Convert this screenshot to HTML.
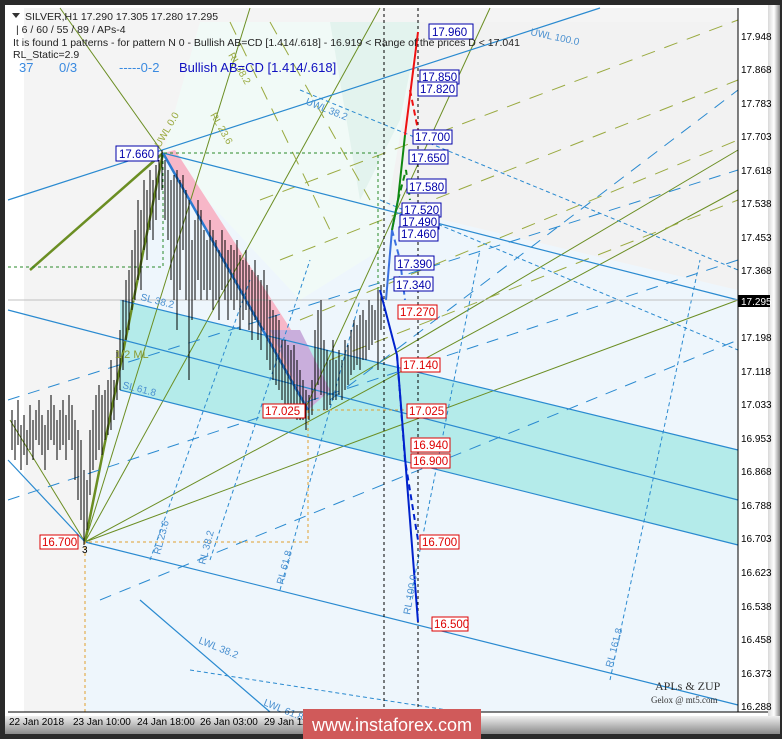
<!DOCTYPE html>
<html><head><meta charset="utf-8"><style>
html,body{margin:0;padding:0;background:#2b2b2b;width:782px;height:739px;overflow:hidden;font-family:"Liberation Sans",sans-serif}
svg{position:absolute;left:0;top:0}
</style></head><body>
<svg width="782" height="739" viewBox="0 0 782 739" xmlns="http://www.w3.org/2000/svg" font-family="Liberation Sans, sans-serif">
<defs><linearGradient id="bev" x1="0" x2="1"><stop offset="0" stop-color="#d8d8d8"/><stop offset="0.5" stop-color="#ffffff"/><stop offset="1" stop-color="#8a8a8a"/></linearGradient>
<linearGradient id="bot" x1="0" y1="0" x2="0" y2="1"><stop offset="0" stop-color="#f0f0f0"/><stop offset="1" stop-color="#8a8a8a"/></linearGradient></defs>
<rect x="0" y="0" width="782" height="739" fill="#2a2a2a"/>
<rect x="5" y="5" width="765" height="726" fill="#ffffff"/>
<rect x="768" y="5" width="12" height="726" fill="url(#bev)"/>
<rect x="5" y="716" width="775" height="18" fill="url(#bot)"/>
<rect x="8" y="8" width="730" height="704" fill="#f4f4f4"/>
<rect x="8" y="8" width="16" height="704" fill="#ffffff"/>
<polygon points="85,542 163,153 738,290 738,712 85,712" fill="#eef6fc"/>
<polygon points="163,153 380,22 738,22 738,290" fill="#f2f2f2"/>
<polygon points="200,22 420,22 380,250 300,300 163,153" fill="#f1faf7"/>
<polygon points="330,22 420,22 400,120 360,200" fill="#e3f3ee"/>
<polygon points="120,300 738,450 738,545 120,390" fill="#b4ebea"/>
<polygon points="85,542 163,153 113,400" fill="#f7b7c8"/>
<polygon points="163,153 175,150 330,390 308,410" fill="#f7b7c8"/>
<polygon points="270,330 300,330 330,390 308,410" fill="#c9aedc"/>
<g stroke="#6b8e23" stroke-width="1" fill="none">
<line x1="85" y1="542" x2="250" y2="8"/>
<line x1="85" y1="542" x2="380" y2="8"/>
<line x1="85" y1="542" x2="738" y2="190"/>
<line x1="85" y1="542" x2="738" y2="300"/>
<line x1="163" y1="153" x2="60" y2="8" />
<line x1="85" y1="542" x2="10" y2="420"/>
<line x1="300" y1="420" x2="490" y2="8"/>
<line x1="350" y1="380" x2="738" y2="150"/>
</g>
<g stroke="#6b8e23" stroke-width="2.5"><line x1="85" y1="542" x2="163" y2="153"/><line x1="163" y1="153" x2="30" y2="270"/></g>
<g stroke="#9aaa40" stroke-width="1" stroke-dasharray="14,10" fill="none">
<line x1="260" y1="200" x2="738" y2="20"/><line x1="280" y1="260" x2="738" y2="80"/><line x1="300" y1="320" x2="738" y2="140"/><line x1="330" y1="360" x2="738" y2="200"/>
<line x1="230" y1="22" x2="330" y2="230"/><line x1="270" y1="22" x2="370" y2="200"/>
</g>
<g stroke="#2a8ad0" stroke-width="1.2" fill="none">
<line x1="8" y1="310" x2="738" y2="500"/>
<line x1="120" y1="300" x2="738" y2="450"/>
<line x1="120" y1="390" x2="738" y2="545"/>
<line x1="163" y1="153" x2="738" y2="300"/>
<line x1="8" y1="200" x2="600" y2="8"/>
<line x1="85" y1="542" x2="738" y2="705"/>
<line x1="140" y1="600" x2="270" y2="712"/>
<line x1="8" y1="460" x2="85" y2="542"/>
</g>
<line x1="163" y1="153" x2="308" y2="410" stroke="#2a7ad0" stroke-width="2.5"/>
<g stroke="#2a8ad0" stroke-width="1" stroke-dasharray="4,3" fill="none">
<line x1="300" y1="90" x2="738" y2="270"/><line x1="380" y1="200" x2="738" y2="350"/>
<line x1="190" y1="670" x2="460" y2="712"/>
<line x1="150" y1="560" x2="250" y2="280"/><line x1="210" y1="560" x2="310" y2="260"/><line x1="280" y1="590" x2="360" y2="300"/><line x1="410" y1="600" x2="480" y2="250"/><line x1="610" y1="680" x2="700" y2="260"/>
</g>
<g stroke="#2a8ad0" stroke-width="1" stroke-dasharray="12,9" fill="none">
<line x1="8" y1="400" x2="738" y2="170"/><line x1="8" y1="500" x2="738" y2="260"/><line x1="100" y1="600" x2="738" y2="340"/><line x1="330" y1="400" x2="738" y2="90"/>
</g>
<g stroke="#000" stroke-width="1" stroke-dasharray="3,3"><line x1="384" y1="8" x2="384" y2="712"/><line x1="418" y1="8" x2="418" y2="712"/></g>
<g stroke="#e0a030" stroke-width="1" stroke-dasharray="3,3" fill="none"><polyline points="85,712 85,542 308,542 308,410 420,410"/></g>
<g stroke="#2a8a2a" stroke-width="1" stroke-dasharray="3,3" fill="none"><polyline points="8,267 163,267 163,153 378,153 378,290"/></g>
<line x1="8" y1="300" x2="738" y2="300" stroke="#c0c0c0"/>
<path stroke="#000" stroke-width="1" fill="none" d="M12 410V450M15 420V460M18 400V445M21 425V470M24 415V455M27 430V465M30 405V450M33 420V460M36 410V440M39 400V445M42 415V455M45 425V470M48 410V450M51 395V440M54 405V445M57 420V460M60 410V450M63 400V445M66 415V460M69 395V440M72 405V450M75 420V480M78 430V500M81 440V520M84 470V545M87 480V530M90 430V495M93 410V470M96 395V460M99 385V450M102 395V455M105 390V440M108 380V435M111 360V430M114 380V420M117 350V400M120 330V390M123 300V370M126 280V340M129 270V330M132 250V310M135 230V300M138 200V280M141 210V290M144 180V250M147 190V260M150 170V230M153 180V240M156 165V220M159 160V200M162 150V190M165 160V220M168 170V240M171 180V280M174 175V300M177 170V330M180 180V290M183 175V250M186 190V300M189 200V380M192 240V320M195 220V300M198 200V280M201 210V300M204 230V290M207 240V300M210 220V290M213 230V310M216 240V300M219 250V320M222 230V290M225 240V300M228 250V320M231 245V300M234 250V310M237 240V300M240 255V330M243 260V320M246 250V310M249 265V330M252 270V340M255 260V320M258 275V340M261 280V350M264 270V330M267 285V360M270 300V370M273 310V380M276 315V385M279 320V390M282 340V400M285 340V410M288 345V415M291 350V410M294 345V405M297 360V420M300 370V420M303 380V420M306 390V430M309 395V420M312 380V415M315 330V400M318 310V385M321 300V395M324 340V410M327 350V410M330 360V405M333 340V400M336 360V400M339 350V395M342 360V400M345 340V390M348 345V385M351 330V375M354 320V370M357 325V365M360 315V370M363 310V360M366 320V360M369 300V350M372 305V345M375 310V340M378 290V370M381 285V330"/>
<g fill="none" stroke-width="2">
<polyline points="380,290 397,355 418,622" stroke="#0022cc"/>
<polyline points="397,355 405,460 418,540" stroke="#0022cc" stroke-dasharray="6,4"/>
<polyline points="386,300 392,230 398,200" stroke="#3a70e0"/>
<polyline points="392,230 400,260 405,300" stroke="#3a70e0" stroke-dasharray="6,4"/>
<polyline points="392,230 398,200 405,135" stroke="#118811"/>
<polyline points="398,200 406,170 410,200" stroke="#118811" stroke-dasharray="6,4"/>
<polyline points="405,135 418,32" stroke="#ee1111"/>
<polyline points="410,90 418,130" stroke="#ee1111" stroke-dasharray="6,4"/>
</g>
<g font-size="11.5">
<g fill="#fff" stroke="#0000aa"><rect x="429" y="24" width="44" height="15"/><rect x="420" y="70" width="39" height="14"/><rect x="418" y="82" width="39" height="14"/><rect x="413" y="130" width="39" height="14"/><rect x="409" y="150" width="39" height="14"/><rect x="407" y="179" width="39" height="14"/><rect x="402" y="203" width="39" height="14"/><rect x="400" y="215" width="39" height="14"/><rect x="399" y="227" width="39" height="14"/><rect x="395" y="256" width="39" height="14"/><rect x="394" y="277" width="39" height="14"/><rect x="116" y="146" width="42" height="15"/></g>
<g fill="#0000aa"><text x="432" y="36">17.960</text><text x="422" y="81">17.850</text><text x="420" y="93">17.820</text><text x="415" y="141">17.700</text><text x="411" y="162">17.650</text><text x="409" y="191">17.580</text><text x="404" y="214">17.520</text><text x="402" y="226">17.490</text><text x="401" y="238">17.460</text><text x="397" y="268">17.390</text><text x="396" y="289">17.340</text><text x="119" y="158">17.660</text></g>
<g fill="#fff" stroke="#dd0000"><rect x="398" y="305" width="39" height="14"/><rect x="401" y="358" width="39" height="14"/><rect x="407" y="404" width="39" height="14"/><rect x="411" y="438" width="39" height="14"/><rect x="411" y="454" width="39" height="14"/><rect x="420" y="535" width="39" height="14"/><rect x="432" y="617" width="36" height="14"/><rect x="263" y="404" width="42" height="14"/><rect x="40" y="535" width="38" height="14"/></g>
<g fill="#dd0000"><text x="400" y="316">17.270</text><text x="403" y="369">17.140</text><text x="409" y="415">17.025</text><text x="413" y="449">16.940</text><text x="413" y="465">16.900</text><text x="422" y="546">16.700</text><text x="434" y="628">16.500</text><text x="265" y="415">17.025</text><text x="42" y="546">16.700</text></g>
</g>
<text x="82" y="553" font-size="10">3</text>
<g font-size="10" fill="#4a90d0"><text x="530" y="35" transform="rotate(12 530 35)">UWL 100.0</text><text x="305" y="104" transform="rotate(22 305 104)">UWL 38.2</text><text x="140" y="300" transform="rotate(14 140 300)">SL 38.2</text><text x="122" y="388" transform="rotate(14 122 388)">SL 61.8</text><text x="198" y="643" transform="rotate(22 198 643)">LWL 38.2</text><text x="263" y="705" transform="rotate(22 263 705)">LWL 61.8</text><text x="160" y="555" transform="rotate(-75 160 555)">RL 23.6</text><text x="205" y="565" transform="rotate(-75 205 565)">RL 38.2</text><text x="283" y="585" transform="rotate(-75 283 585)">RL 61.8</text><text x="612" y="668" transform="rotate(-75 612 668)">RL 161.8</text><text x="410" y="615" transform="rotate(-80 410 615)">RL 100.0</text></g>
<g font-size="10" fill="#9aaa40"><text x="210" y="115" transform="rotate(60 210 115)">RL 23.6</text><text x="228" y="55" transform="rotate(60 228 55)">RL 38.2</text><text x="160" y="148" transform="rotate(-60 160 148)">UWL 0.0</text><text x="115" y="358" fill="#8a9a30" font-size="11">1/2 ML</text></g>
<path d="M12 13l4 5 4-5z" fill="#333"/>
<g font-size="10.5" fill="#222"><text x="25" y="20">SILVER,H1  17.290 17.305 17.280 17.295</text><text x="16" y="33">| 6 / 60 / 55 / 89 / APs-4</text><text x="13" y="46">It is found 1 patterns  -  for pattern N 0 - Bullish AB=CD [1.414/.618] - 16.919 &lt; Range of the prices D &lt; 17.041</text><text x="13" y="58">RL_Static=2.9</text></g>
<g font-size="13" fill="#3a8ae0"><text x="19" y="72">37</text><text x="59" y="72">0/3</text><text x="119" y="72">-----0-2</text></g>
<text x="179" y="72" font-size="13" fill="#1010c0">Bullish AB=CD [1.414/.618]</text>
<rect x="738" y="8" width="30" height="708" fill="#ffffff"/>
<line x1="738" y1="8" x2="738" y2="712" stroke="#000"/>
<line x1="8" y1="712" x2="768" y2="712" stroke="#000"/>
<g font-size="10" fill="#000"><text x="741" y="40">17.948</text><text x="741" y="73">17.868</text><text x="741" y="107">17.783</text><text x="741" y="140">17.703</text><text x="741" y="174">17.618</text><text x="741" y="207">17.538</text><text x="741" y="241">17.453</text><text x="741" y="274">17.368</text><text x="741" y="341">17.198</text><text x="741" y="375">17.118</text><text x="741" y="408">17.033</text><text x="741" y="442">16.953</text><text x="741" y="475">16.868</text><text x="741" y="509">16.788</text><text x="741" y="542">16.703</text><text x="741" y="576">16.623</text><text x="741" y="610">16.538</text><text x="741" y="643">16.458</text><text x="741" y="677">16.373</text><text x="741" y="710">16.288</text></g>
<rect x="738" y="295" width="32" height="12" fill="#000"/><text x="741" y="305" font-size="10" fill="#fff">17.295</text>
<g font-size="10" fill="#000"><text x="9" y="725">22 Jan 2018</text><text x="73" y="725">23 Jan 10:00</text><text x="137" y="725">24 Jan 18:00</text><text x="200" y="725">26 Jan 03:00</text><text x="264" y="725">29 Jan 11:00</text></g>
<text x="655" y="690" font-size="12" fill="#333" font-family="Liberation Serif, serif">APLs &amp; ZUP</text>
<text x="651" y="703" font-size="9" fill="#333" font-family="Liberation Serif, serif">Gelox @ mt5.com</text>
<rect x="303" y="709" width="178" height="30" fill="#d05a5a"/>
<text x="392" y="731" font-size="18" fill="#fff" text-anchor="middle">www.instaforex.com</text>
</svg>
</body></html>
